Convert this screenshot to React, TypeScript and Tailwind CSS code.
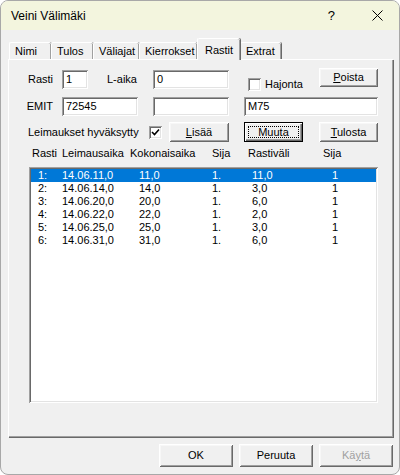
import React from "react"

const raised =
  "shadow-[inset_1px_1px_0_#ffffff,inset_-1px_-1px_0_#696969,inset_2px_2px_0_#f7f7f7,inset_-2px_-2px_0_#a0a0a0]"
const sunken =
  "shadow-[inset_1px_1px_0_#a0a0a0,inset_-1px_-1px_0_#ffffff,inset_2px_2px_0_#696969,inset_-2px_-2px_0_#e3e3e3]"

const rows = [
  ["1:", "14.06.11,0", "11,0", "1.", "11,0", "1"],
  ["2:", "14.06.14,0", "14,0", "1.", "3,0", "1"],
  ["3:", "14.06.20,0", "20,0", "1.", "6,0", "1"],
  ["4:", "14.06.22,0", "22,0", "1.", "2,0", "1"],
  ["5:", "14.06.25,0", "25,0", "1.", "3,0", "1"],
  ["6:", "14.06.31,0", "31,0", "1.", "6,0", "1"],
]

function Input({ value, className }: { value?: string; className: string }) {
  return (
    <div className={`h-[19px] bg-white pl-[4px] leading-[19px] ${sunken} ${className}`}>{value}</div>
  )
}

function Check({ checked, className }: { checked?: boolean; className: string }) {
  return (
    <div className={`flex h-[13px] w-[13px] items-center justify-center bg-white ${sunken} ${className}`}>
      {checked && (
        <svg width="9" height="9" viewBox="0 0 9 9">
          <path d="M1 4 L3.5 6.5 L8 1.5" fill="none" stroke="#000" strokeWidth="1.6" />
        </svg>
      )}
    </div>
  )
}

function Btn({
  children,
  className,
  def,
}: {
  children: React.ReactNode
  className: string
  def?: boolean
}) {
  if (def) {
    return (
      <div
        className={`flex items-center justify-center bg-[#f0f0f0] shadow-[inset_0_0_0_1px_#000000,inset_2px_2px_0_#ffffff,inset_-2px_-2px_0_#696969,inset_-3px_-3px_0_#a0a0a0] ${className}`}
      >
        <span className="flex h-[calc(100%-8px)] w-[calc(100%-8px)] items-center justify-center border border-dotted border-black">
          {children}
        </span>
      </div>
    )
  }
  return (
    <div className={`flex items-center justify-center bg-[#f0f0f0] ${raised} ${className}`}>{children}</div>
  )
}

function Tab({ label, w, active }: { label: string; w: string; active?: boolean }) {
  if (active) {
    return (
      <div
        className={`relative z-10 -mb-[1px] flex h-[22px] ${w} items-start rounded-t-[2px] border-l border-t border-white bg-[#f0f0f0] pl-[7px] pt-[3px] shadow-[inset_-1px_0_0_#a0a0a0,1px_0_0_#696969]`}
      >
        {label}
      </div>
    )
  }
  return (
    <div
      className={`flex h-[17px] ${w} items-center rounded-t-[2px] border-l border-t border-white pl-[5px] shadow-[inset_-1px_0_0_#a0a0a0,1px_0_0_#696969]`}
    >
      {label}
    </div>
  )
}

export default function App() {
  return (
    <div
      className="flex h-[475px] w-[400px] flex-col overflow-hidden rounded-[8px] border border-[#a8a8a8] bg-[#f0f0f0] text-[11px] text-black"
      style={{ fontFamily: '"Liberation Sans", Arial, sans-serif' }}
    >
      <div className="flex h-[29px] shrink-0 items-center bg-[#f3f5de] pl-[10px] text-[12px]">
        <span className="flex-1">Veini Välimäki</span>
        <span className="mr-[37px] text-[13px]">?</span>
        <svg width="11" height="11" viewBox="0 0 11 11" className="mr-[16px]">
          <path d="M0.5 0.5 L10.5 10.5 M10.5 0.5 L0.5 10.5" stroke="#000" strokeWidth="1" />
        </svg>
      </div>

      <div className="ml-[8px] mt-[8px] flex h-[21px] items-end">
        <Tab label="Nimi" w="w-[42px]" />
        <Tab label="Tulos" w="w-[42px]" />
        <Tab label="Väliajat" w="w-[46px]" />
        <Tab label="Kierrokset" w="w-[58px]" />
        <Tab label="Rastit" w="w-[43px]" active />
        <Tab label="Extrat" w="w-[41px]" />
      </div>

      <div className="ml-[7px] flex h-[378px] w-[385px] flex-col border-l border-t border-white shadow-[inset_-1px_-1px_0_#a0a0a0,1px_1px_0_#696969]">
        <div className="mt-[8px] flex h-[22px] items-start">
          <div className="mt-[2px] w-[44px] text-right leading-[19px]">Rasti</div>
          <Input value="1" className="ml-[9px] mt-[2px] w-[26px]" />
          <div className="ml-[19px] mt-[2px] w-[46px] leading-[19px]">L-aika</div>
          <Input value="0" className="mt-[2px] w-[76px]" />
          <Check className="ml-[19px] mt-[10px]" />
          <div className="ml-[4px] mt-[9px] w-[54px] leading-[14px]">Hajonta</div>
          <Btn className="h-[19px] w-[59px]">
            <span>
              <u>P</u>oista
            </span>
          </Btn>
        </div>

        <div className="mt-[7px] flex h-[19px] items-center">
          <div className="w-[44px] text-right">EMIT</div>
          <Input value="72545" className="ml-[9px] w-[76px]" />
          <Input className="ml-[15px] w-[76px]" />
          <Input value="M75" className="ml-[15px] w-[134px]" />
        </div>

        <div className="mt-[6px] flex h-[20px] items-center">
          <div className="ml-[19px] w-[121px]">Leimaukset hyväksytty</div>
          <Check checked className="" />
          <Btn className="ml-[7px] h-[20px] w-[60px]">
            <span>
              <u>L</u>isää
            </span>
          </Btn>
          <Btn def className="ml-[15px] h-[20px] w-[59px]">
            Muuta
          </Btn>
          <Btn className="ml-[16px] h-[20px] w-[59px]">
            <span>
              <u>T</u>ulosta
            </span>
          </Btn>
        </div>

        <div className="ml-[23px] mt-[4px] flex h-[14px] items-center">
          <div className="w-[30px]">Rasti</div>
          <div className="w-[68px]">Leimausaika</div>
          <div className="w-[82px]">Kokonaisaika</div>
          <div className="w-[36px]">Sija</div>
          <div className="w-[75px]">Rastiväli</div>
          <div>Sija</div>
        </div>

        <div className={`ml-[20px] mt-[7px] h-[236px] w-[349px] bg-white p-[2px] ${sunken}`}>
          {rows.map((r, i) => (
            <div
              key={i}
              className={`flex h-[13px] items-center pl-[7px] leading-[13px] ${
                i === 0 ? "bg-[#0078d7] text-white" : ""
              }`}
            >
              <div className="w-[24px]">{r[0]}</div>
              <div className="w-[77px]">{r[1]}</div>
              <div className="w-[73px]">{r[2]}</div>
              <div className="w-[40px]">{r[3]}</div>
              <div className="w-[80px]">{r[4]}</div>
              <div>{r[5]}</div>
            </div>
          ))}
        </div>
      </div>

      <div className="mr-[6px] mt-[7px] flex justify-end gap-[6px]">
        <Btn className="h-[23px] w-[74px]">OK</Btn>
        <Btn className="h-[23px] w-[74px]">Peruuta</Btn>
        <Btn className="h-[23px] w-[74px] text-[#a0a0a0]">
          <span>
            Kä<u>y</u>tä
          </span>
        </Btn>
      </div>
    </div>
  )
}
